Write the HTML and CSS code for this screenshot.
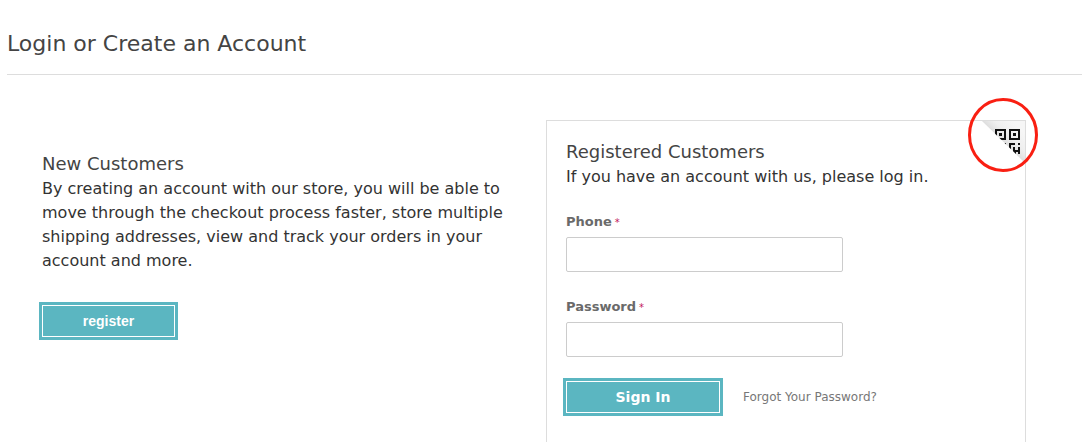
FILE: index.html
```html
<!DOCTYPE html>
<html lang="en">
<head>
<meta charset="utf-8">
<meta name="viewport" content="width=device-width, initial-scale=1">
<title>Login or Create an Account</title>
<link rel="stylesheet" href="styles.css">
</head>
<body>
<main class="page">
  <h1 class="page-title">Login or Create an Account</h1>
  <div class="columns">
    <section class="new-customers">
      <h2 class="section-title">New Customers</h2>
      <p class="lead">By creating an account with our store, you will be able to move through the checkout process faster, store multiple shipping addresses, view and track your orders in your account and more.</p>
      <button class="button button-register" type="button">register</button>
    </section>
    <section class="registered">
      <h2 class="section-title">Registered Customers</h2>
      <p class="lead">If you have an account with us, please log in.</p>
      <form class="login">
        <div class="field">
          <label class="label" for="phone">Phone<span class="required">*</span></label>
          <input class="input" id="phone" type="text">
        </div>
        <div class="field">
          <label class="label" for="password">Password<span class="required">*</span></label>
          <input class="input" id="password" type="password">
        </div>
        <div class="actions">
          <button class="button button-signin" type="submit">Sign In</button>
          <a class="forgot" href="#">Forgot Your Password?</a>
        </div>
      </form>
      <svg class="qr-corner" viewBox="0 0 44 41" role="img" aria-label="QR code login">
        <defs>
          <linearGradient id="fold" gradientUnits="userSpaceOnUse" x1="21" y1="20" x2="36" y2="5">
            <stop offset="0" stop-color="#dedede"/>
            <stop offset=".4" stop-color="#efefef"/>
            <stop offset="1" stop-color="#f6f6f6"/>
          </linearGradient>
          <clipPath id="corner"><path d="M1 0H44V41L42 40Z"/></clipPath>
        </defs>
        <g clip-path="url(#corner)">
          <path fill="url(#fold)" d="M0 0H44V41H0Z"/>
          <path fill="none" stroke="#111" stroke-width="2" d="M15 9H24V18H15ZM29 9H38V18H29Z"/>
          <path fill="#111" d="M18 12h3v3h-3ZM32 12h3v3h-3ZM14 22h3v3h-3ZM21 22h4v4h-2v-2h-2ZM28 22h6v2h-4v6h-2ZM37 22h2v2h-2ZM32 26h2v3h3v-3h2v7h-2v-2h-2v2h-3ZM28 31h2v2h-2Z"/>
        </g>
      </svg>
      <svg class="highlight" viewBox="0 0 70 74" aria-hidden="true">
        <ellipse cx="35" cy="37" rx="33.5" ry="35.5" fill="none" stroke="#f91f12" stroke-width="3"/>
      </svg>
    </section>
  </div>
</main>
</body>
</html>
```
FILE: styles.css
```css
* {
  box-sizing: border-box;
}

body {
  margin: 0;
  background: #fff;
  color: #333;
  font-family: Verdana, "DejaVu Sans", sans-serif;
  font-size: 16px;
  line-height: 24px;
}

.page {
  padding: 28px 0 0 7px;
}

.page-title {
  margin: 0;
  padding-bottom: 14px;
  border-bottom: 1px solid #ddd;
  color: #444;
  font-size: 22px;
  font-weight: 400;
  line-height: 32px;
}

.columns {
  display: grid;
  grid-template-columns: minmax(0, 504fr) minmax(0, 480fr);
  padding: 45px 56px 0 35px;
}

.new-customers {
  padding: 32px 36px 0 0;
}

.section-title {
  margin: 0 0 1px;
  color: #444;
  font-size: 18px;
  font-weight: 400;
  line-height: 24px;
}

.lead {
  margin: 0;
}

.button {
  display: block;
  height: 32px;
  padding: 0;
  border: 1px solid #fff;
  background: #5bb6c1;
  box-shadow: 0 0 0 3px #5bb6c1;
  color: #fff;
  font-weight: 700;
}

.button-register {
  width: 133px;
  margin-top: 32px;
  font-family: "Liberation Sans", Arial, sans-serif;
  font-size: 14px;
}

.button-signin {
  width: 154px;
  font-family: inherit;
  font-size: 14px;
}

.registered {
  position: relative;
  padding: 19px 19px 32px;
  border: 1px solid #ddd;
}

.login {
  margin-top: 22px;
}

.field {
  margin-bottom: 24px;
}

.label {
  display: block;
  margin-bottom: 4px;
  color: #6a6a6a;
  font-size: 13px;
  font-weight: 700;
  line-height: 22px;
}

.required {
  margin-left: 3px;
  color: #c2185b;
  font-size: 10px;
  font-weight: 400;
  line-height: 1;
}

.input {
  display: block;
  width: 277px;
  max-width: 100%;
  height: 35px;
  padding: 0 8px;
  border: 1px solid #ccc;
  border-radius: 2px;
  font: inherit;
}

.actions {
  display: flex;
  align-items: center;
  gap: 23px;
}

.forgot {
  color: #777;
  font-size: 12px;
  text-decoration: none;
}

.qr-corner {
  position: absolute;
  top: 0;
  right: 0;
  width: 44px;
  height: 41px;
}

.highlight {
  position: absolute;
  top: -23px;
  right: -13px;
  width: 70px;
  height: 74px;
}
```
